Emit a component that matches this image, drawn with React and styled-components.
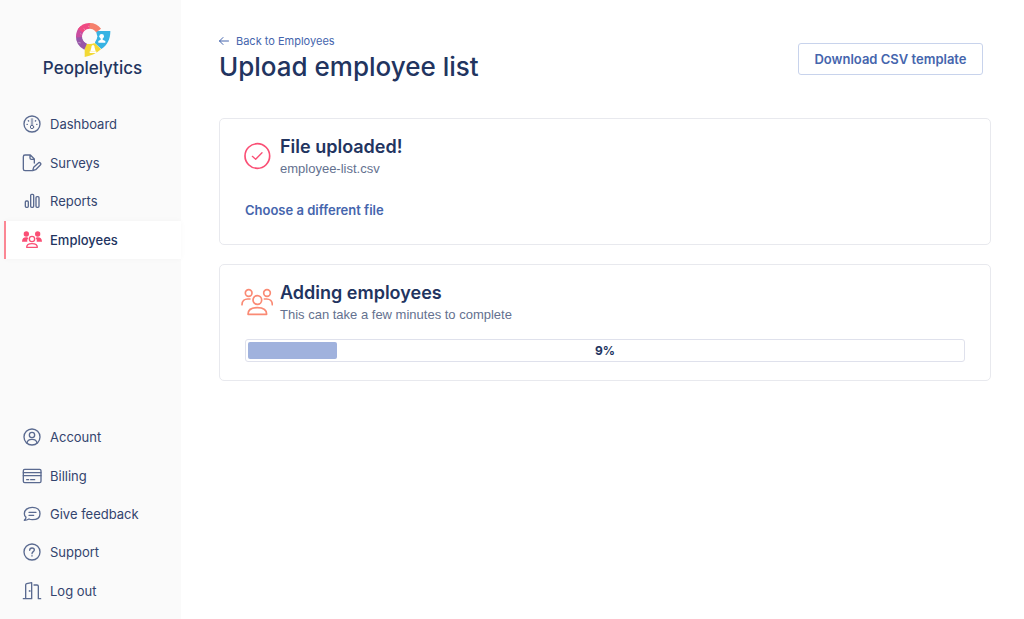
import React from "react";
import styled, { createGlobalStyle, css } from "styled-components";

const color = {
  ink: "#22345f",
  nav: "#33446e",
  link: "#4565ad",
  muted: "#64718f",
  pink: "#fa4f75",
  coral: "#fa8a74",
  line: "#e8e9ee",
};

const GlobalStyle = createGlobalStyle`
  *, *::before, *::after { box-sizing: border-box; }
  body {
    margin: 0;
    background: #fff;
    color: ${color.ink};
    font-family: Inter, "Liberation Sans", sans-serif;
    -webkit-font-smoothing: antialiased;
  }
  h1, h2, p, ul { margin: 0; padding: 0; }
`;

const Page = styled.div`
  display: flex;
  min-height: 100vh;
`;

const Sidebar = styled.aside`
  flex: 0 0 181px;
  display: flex;
  flex-direction: column;
  justify-content: space-between;
  padding: 22px 0 9px 4px;
  background: #fafafa;
`;

const Brand = styled.a`
  display: flex;
  flex-direction: column;
  align-items: center;
  height: 83px;
  color: ${color.ink};
  font-size: 17px;
  line-height: 20px;
  font-weight: 500;
  text-decoration: none;
`;

const Logo = styled.svg`
  flex: none;
  width: 36px;
  height: 36px;
`;

const NavList = styled.ul`
  display: grid;
  grid-auto-rows: 1fr;
  height: ${(p) => p.$height};
  list-style: none;
`;

const NavLink = styled.a`
  display: flex;
  align-items: center;
  gap: 8px;
  height: 100%;
  padding-left: 16px;
  border-left: 2px solid transparent;
  color: ${color.nav};
  font-size: 13px;
  line-height: 20px;
  text-decoration: none;
  ${(p) =>
    p.$active &&
    css`
      border-left-color: #fb8794;
      background: #fff;
      box-shadow: 0 0 6px rgba(0, 0, 0, 0.03);
      color: ${color.ink};
      font-weight: 500;
    `}
`;

const NavIcon = styled.svg`
  flex: none;
  width: 20px;
  height: 20px;
  fill: none;
  stroke: ${(p) => (p.$active ? color.pink : "#5a6a90")};
  stroke-width: 4;
  stroke-linecap: round;
  stroke-linejoin: round;
`;

const Main = styled.main`
  flex: 1;
  min-width: 0;
  padding: 33px 33px 32px 38px;
`;

const Header = styled.header`
  display: flex;
  justify-content: space-between;
  align-items: flex-start;
  min-height: 85px;
  padding-right: 8px;
`;

const Heading = styled.div`
  display: flex;
  flex-direction: column;
  align-items: flex-start;
`;

const BackLink = styled.a`
  display: flex;
  align-items: center;
  gap: 7px;
  color: ${color.link};
  font-size: 11px;
  line-height: 16px;
  text-decoration: none;
`;

const Arrow = styled.svg`
  width: 10px;
  height: 10px;
  fill: none;
  stroke: currentColor;
  stroke-linecap: round;
  stroke-linejoin: round;
`;

const Title = styled.h1`
  font-size: 26px;
  line-height: 36px;
  font-weight: 500;
`;

const OutlineButton = styled.button`
  min-width: 185px;
  height: 32px;
  margin-top: 10px;
  padding: 0 12px;
  border: 1px solid #c8d3ec;
  border-radius: 3px;
  background: #fff;
  color: ${color.link};
  font: 600 13px/20px Inter, "Liberation Sans", sans-serif;
  white-space: nowrap;
`;

const Cards = styled.div`
  display: grid;
  gap: 19px;
`;

const Card = styled.section`
  padding: 17px 25px ${(p) => (p.$roomy ? "24px" : "18px")};
  border: 1px solid ${color.line};
  border-radius: 5px;
`;

const CardHead = styled.div`
  display: flex;
  align-items: center;
`;

const StatusIcon = styled.svg`
  flex: none;
  width: 32px;
  height: 32px;
  margin: 0 7px 2px -4px;
  fill: none;
  stroke: ${(p) => p.$tone};
  stroke-width: 5;
  stroke-linecap: round;
  stroke-linejoin: round;
`;

const CardTitle = styled.h2`
  font-size: 18px;
  line-height: 22px;
  font-weight: 600;
`;

const CardText = styled.p`
  color: ${color.muted};
  font-family: "Liberation Sans", sans-serif;
  font-size: 13px;
  line-height: 21px;
`;

const TextButton = styled.button`
  display: block;
  margin-top: 21px;
  padding: 0;
  border: 0;
  background: none;
  color: ${color.link};
  font: 600 13px/20px Inter, "Liberation Sans", sans-serif;
`;

const Progress = styled.div`
  position: relative;
  height: 23px;
  margin-top: 14px;
  padding: 2px;
  border: 1px solid #dfe1ec;
  border-radius: 3px;
`;

const ProgressFill = styled.div`
  height: 100%;
  border-radius: 2px;
  background: #a0b2dd;
`;

const ProgressLabel = styled.span`
  position: absolute;
  inset: 0;
  font-size: 12px;
  line-height: 21px;
  font-weight: 700;
  text-align: center;
`;

const icons = {
  dashboard: (
    <>
      <circle cx="30" cy="30" r="24" />
      <path d="M28 14v20M32 14v20" strokeWidth="2" />
      <path d="M15 31h1M44 31h1M19 20l1 1M41 20l-1 1" />
      <circle cx="30" cy="39" r="5" strokeWidth="3" />
    </>
  ),
  surveys: (
    <>
      <path d="M29 53H9a5 5 0 0 1-5-5V11a5 5 0 0 1 5-5h16l12 12v12M24 6v9a4 4 0 0 0 4 4h9" />
      <path d="M32 53l3-10 14-13a4 4 0 0 1 6 6L41 50z" />
    </>
  ),
  reports: (
    <>
      <rect x="10" y="30" width="9" height="19" rx="3" />
      <rect x="26" y="10" width="9" height="39" rx="3" />
      <rect x="42" y="17" width="9" height="32" rx="3" />
    </>
  ),
  employees: (
    <>
      <g fill={color.pink} stroke="none">
        <circle cx="13" cy="12" r="8" />
        <circle cx="47" cy="12" r="8" />
        <path d="M0 35c0-9 5-13 12-13 4 0 6 1 7 3-3 3-4 6-3 10zM60 35c0-9-5-13-12-13-4 0-6 1-7 3 3 3 4 6 3 10z" />
      </g>
      <circle cx="30" cy="27" r="8" />
      <path d="M14 52c0-8 6-11 16-11s16 3 16 11z" />
    </>
  ),
  account: (
    <>
      <circle cx="30" cy="30" r="24" />
      <circle cx="30" cy="24" r="8" />
      <path d="M15 48c1-8 7-11 15-11s14 3 15 11" />
    </>
  ),
  billing: (
    <>
      <rect x="4" y="10" width="53" height="40" rx="4" />
      <path d="M4 20h53M4 29h53M14 41h6M26 41h12" />
    </>
  ),
  feedback: (
    <>
      <path d="M12 40C8 36 7 33 7 29 7 18 17 10 31 10s23 8 23 19-9 18-23 18c-4 0-7 0-10-2-5 3-9 4-14 4 3-3 5-5 5-9z" />
      <path d="M21 25h21M21 34h14" />
    </>
  ),
  support: (
    <>
      <circle cx="30" cy="30" r="24" />
      <path d="M23 25c0-5 3-7 7-7s7 3 7 6c0 5-7 5-7 11M30 41v1" />
    </>
  ),
  logout: (
    <>
      <path d="M4 53h7V12a4 4 0 0 1 3-4l15-3v48M11 53h18M36 12h9a4 4 0 0 1 4 4v37h7" />
      <circle cx="23" cy="30" r="1" />
    </>
  ),
};

const primaryNav = [
  ["dashboard", "Dashboard"],
  ["surveys", "Surveys"],
  ["reports", "Reports"],
  ["employees", "Employees"],
];

const secondaryNav = [
  ["account", "Account"],
  ["billing", "Billing"],
  ["feedback", "Give feedback"],
  ["support", "Support"],
  ["logout", "Log out"],
];

function Nav({ label, items, active, height }) {
  return (
    <nav aria-label={label}>
      <NavList $height={height}>
        {items.map(([id, text]) => (
          <li key={id}>
            <NavLink
              href={`#${id}`}
              $active={id === active}
              aria-current={id === active ? "page" : undefined}
            >
              <NavIcon viewBox="0 0 60 60" $active={id === active} aria-hidden="true">
                {icons[id]}
              </NavIcon>
              {text}
            </NavLink>
          </li>
        ))}
      </NavList>
    </nav>
  );
}

function BrandMark() {
  return (
    <Logo viewBox="0 0 108 108" aria-hidden="true">
      <path d="M64 27h42c0 24-9 42-27 54L60 64z" fill="#37b3e3" />
      <path d="M29 66l31-2 18 18c-14 12-29 20-49 23z" fill="#f2d935" />
      <g fill="none" strokeWidth="20">
        <path d="M32 74A32 32 0 0 1 13 42" stroke="#9757a8" />
        <path d="M13 46A32 32 0 0 1 23 20" stroke="#c94da0" />
        <path d="M17 27A32 32 0 0 1 46 13" stroke="#ef4a83" />
        <path d="M44 13A32 32 0 0 1 70 26" stroke="#f5806c" />
      </g>
      <circle cx="44" cy="43" r="23" fill="#fafafa" />
      <g fill="#fff">
        <circle cx="80" cy="43" r="7" />
        <path d="M77 47h6v6l8 4v5H70v-5l7-4z" />
        <path d="M46 88l3-11c0-5 2-8 5-8s5 3 5 8l3 11z" />
        <path d="M44 88h20v5H44z" />
      </g>
      <g stroke="#fff" strokeWidth="2" opacity="0.6">
        <path d="M10 61l7 2M16 35l3 2M26 20l4 3M33 27l3-1M40 13l3 1" />
      </g>
    </Logo>
  );
}

const progress = { label: "9%", value: 9, filled: 12.5 };

export default function App() {
  return (
    <>
      <GlobalStyle />
      <Page>
        <Sidebar>
          <div>
            <Brand href="#home">
              <BrandMark />
              Peoplelytics
            </Brand>
            <Nav label="Main" items={primaryNav} active="employees" height="154px" />
          </div>
          <Nav label="Account" items={secondaryNav} height="192px" />
        </Sidebar>
        <Main>
          <Header>
            <Heading>
              <BackLink href="#employees">
                <Arrow viewBox="0 0 10 10" aria-hidden="true">
                  <path d="M9.500 5H.5M4 1.500L.5 5L4 8.500" />
                </Arrow>
                Back to Employees
              </BackLink>
              <Title>Upload employee list</Title>
            </Heading>
            <OutlineButton type="button">Download CSV template</OutlineButton>
          </Header>
          <Cards>
            <Card $roomy>
              <CardHead>
                <StatusIcon viewBox="0 0 96 96" $tone={color.pink} aria-hidden="true">
                  <circle cx="49" cy="45" r="37" />
                  <path d="M34 46l10 9 19-20" strokeWidth="4" />
                </StatusIcon>
                <div>
                  <CardTitle>File uploaded!</CardTitle>
                  <CardText>employee-list.csv</CardText>
                </div>
              </CardHead>
              <TextButton type="button">Choose a different file</TextButton>
            </Card>
            <Card>
              <CardHead>
                <StatusIcon viewBox="0 0 96 96" $tone={color.coral} aria-hidden="true">
                  <circle cx="23" cy="18" r="10" />
                  <circle cx="78" cy="18" r="10" />
                  <circle cx="49" cy="39" r="13" />
                  <path d="M3 53c0-11 8-17 17-17h7M94 53c0-11-8-17-17-17h-7" />
                  <path d="M21 82c0-14 10-20 28-20s28 6 28 20z" />
                </StatusIcon>
                <div>
                  <CardTitle>Adding employees</CardTitle>
                  <CardText>This can take a few minutes to complete</CardText>
                </div>
              </CardHead>
              <Progress
                role="progressbar"
                aria-label="Adding employees"
                aria-valuemin={0}
                aria-valuemax={100}
                aria-valuenow={progress.value}
              >
                <ProgressFill style={{ width: `${progress.filled}%` }} />
                <ProgressLabel>{progress.label}</ProgressLabel>
              </Progress>
            </Card>
          </Cards>
        </Main>
      </Page>
    </>
  );
}
